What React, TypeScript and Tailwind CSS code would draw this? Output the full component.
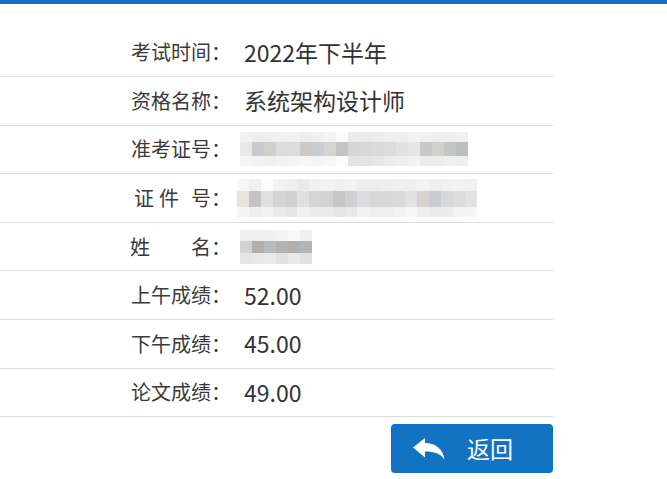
type MosaicRow = { h: string; cells: string[] };

const idMosaic: MosaicRow[] = [
  {
    h: 'h-[10px]',
    cells: [
      'bg-[#f0f0f0]', 'bg-[#eeeeee]', 'bg-[#efefef]', 'bg-[#f0f0f0]', 'bg-[#f1f1f1]', 'bg-[#eeeeee]', 'bg-[#f0f0f0]',
      'bg-[#f4f4f4]', 'bg-[#fbfbfb]', 'bg-[#ececec]', 'bg-[#eaeaea]', 'bg-[#ececec]', 'bg-[#eeeeee]', 'bg-[#efefef]',
      'bg-[#f3f3f3]', 'bg-[#f0f0f0]', 'bg-[#eeeeee]', 'bg-[#eeeeee]', 'bg-[#f0f0f0]',
    ],
  },
  {
    h: 'h-[14px]',
    cells: [
      'bg-[#e8e8e8]', 'bg-[#c8c9cc]', 'bg-[#cfcfcc]', 'bg-[#dcdcdc]', 'bg-[#dcdcdc]', 'bg-[#cdc8c4]', 'bg-[#c9ccd3]',
      'bg-[#d4d4d4]', 'bg-[#c6c4c2]', 'bg-[#d6d6d6]', 'bg-[#d8d8d8]', 'bg-[#dadada]', 'bg-[#dcdcdc]', 'bg-[#e2e2e2]',
      'bg-[#e6e6e6]', 'bg-[#c8c8cb]', 'bg-[#d2d0cb]', 'bg-[#c4c5c5]', 'bg-[#bcbdc1]',
    ],
  },
  {
    h: 'h-[10px]',
    cells: [
      'bg-[#f4f4f4]', 'bg-[#f2f2f2]', 'bg-[#f0f0f0]', 'bg-[#f2f2f2]', 'bg-[#f4f4f4]', 'bg-[#f6f6f6]', 'bg-[#f4f4f4]',
      'bg-[#f6f6f6]', 'bg-[#fdfdfd]', 'bg-[#e2e2e2]', 'bg-[#e4e4e4]', 'bg-[#e6e6e6]', 'bg-[#ebebeb]', 'bg-[#eeeeee]',
      'bg-[#f2f2f2]', 'bg-[#ebebeb]', 'bg-[#ececec]', 'bg-[#eef0f0]', 'bg-[#eeeeee]',
    ],
  },
];

const certMosaic: MosaicRow[] = [
  {
    h: 'h-[12px]',
    cells: [
      'bg-[#f6f6f6]', 'bg-[#f0f0f0]', 'bg-[#fbfbfb]', 'bg-[#f2f2f2]', 'bg-[#f0f0f0]', 'bg-[#e8eaea]', 'bg-[#f0f0f0]',
      'bg-[#f2f2f2]', 'bg-[#f0f0f0]', 'bg-[#f2f2f2]', 'bg-[#eeeeee]', 'bg-[#ececec]', 'bg-[#eeeeee]', 'bg-[#f0f0f0]',
      'bg-[#eeeeee]', 'bg-[#f2f2f2]', 'bg-[#eeeeee]', 'bg-[#f0f0f0]', 'bg-[#f2f2f2]', 'bg-[#f0f0f0]',
    ],
  },
  {
    h: 'h-[16px]',
    cells: [
      'bg-[#e6e3e0]', 'bg-[#c4c4c6]', 'bg-[#e0e0e0]', 'bg-[#d4d4d4]', 'bg-[#d0d0d0]', 'bg-[#e0e0e0]', 'bg-[#d4d4d4]',
      'bg-[#d2d2d2]', 'bg-[#c8c6c4]', 'bg-[#d0d0d0]', 'bg-[#dcdce0]', 'bg-[#d8d8d8]', 'bg-[#d8d8d8]', 'bg-[#dadada]',
      'bg-[#e2e2e2]', 'bg-[#d6d2ce]', 'bg-[#c8ccd0]', 'bg-[#d8d8da]', 'bg-[#dcdcdc]', 'bg-[#e2e2e2]',
    ],
  },
  {
    h: 'h-[10px]',
    cells: [
      'bg-[#f4f4f4]', 'bg-[#eeeeee]', 'bg-[#f2f2f2]', 'bg-[#eaeaea]', 'bg-[#e6e6e6]', 'bg-[#f2f2f2]', 'bg-[#ececec]',
      'bg-[#eaeaea]', 'bg-[#e4e4e4]', 'bg-[#e8e8e8]', 'bg-[#f2f2f2]', 'bg-[#eeeeee]', 'bg-[#eeeeee]', 'bg-[#f2f2f2]',
      'bg-[#f6f6f6]', 'bg-[#eeeeee]', 'bg-[#eaeaea]', 'bg-[#ececec]', 'bg-[#f4f4f4]', 'bg-[#f6f6f6]',
    ],
  },
];

const nameMosaic: MosaicRow[] = [
  {
    h: 'h-[11px]',
    cells: ['bg-[#eeeeee]', 'bg-[#eeeeee]', 'bg-[#f0f0f0]', 'bg-[#f3f3f3]', 'bg-[#f8f8f8]', 'bg-[#f0f0f0]'],
  },
  {
    h: 'h-[12px]',
    cells: ['bg-[#d2d2d2]', 'bg-[#b2aeab]', 'bg-[#b9babf]', 'bg-[#b1b3b3]', 'bg-[#b3afac]', 'bg-[#b2b5b8]'],
  },
  {
    h: 'h-[11px]',
    cells: ['bg-[#e4e4e4]', 'bg-[#e8e8e8]', 'bg-[#eaeaea]', 'bg-[#e2e2e2]', 'bg-[#e8e8e8]', 'bg-[#e0e0e0]'],
  },
];

const Mosaic = ({ rows, className }: { rows: MosaicRow[]; className: string }) => (
  <div className={`flex flex-col blur-[0.6px] ${className}`}>
    {rows.map((r, i) => (
      <div key={i} className={`flex ${r.h}`}>
        {r.cells.map((c, j) => (
          <div key={j} className={`w-[12px] h-full ${c}`}></div>
        ))}
      </div>
    ))}
  </div>
);

// reply arrow, head left, tail curling down
const ReplyIcon = () => (
  <svg viewBox="0 0 32 22" className="w-[32px] h-[22px]" fill="currentColor">
    <path d="M0 9.5 L12 0 L12 5 C22 5 30 10.5 31.5 21.5 C27.5 15.5 21 13.5 12 13.5 L12 19.5 Z" />
  </svg>
);

const rows = [
  { label: <span>考试时间：</span>, value: <span>2022年下半年</span> },
  { label: <span>资格名称：</span>, value: <span>系统架构设计师</span> },
  { label: <span>准考证号：</span>, value: <Mosaic rows={idMosaic} className="-ml-[4px]" /> },
  {
    label: (
      <span>
        证<span className="ml-[5px]">件</span>
        <span className="ml-[12px]">号：</span>
      </span>
    ),
    value: <Mosaic rows={certMosaic} className="-ml-[7px]" />,
  },
  {
    label: (
      <span>
        姓<span className="ml-[41px]">名：</span>
      </span>
    ),
    value: <Mosaic rows={nameMosaic} className="-ml-[4px]" />,
  },
  { label: <span>上午成绩：</span>, value: <span>52.00</span> },
  { label: <span>下午成绩：</span>, value: <span>45.00</span> },
  { label: <span>论文成绩：</span>, value: <span>49.00</span> },
];

const App = () => {
  return (
    <div className="min-h-screen bg-white font-['Microsoft_YaHei','Noto_Sans_CJK_SC','Noto_Sans',sans-serif] text-[#333333]">
      <div className="h-[4px] w-full bg-[#1373c3]"></div>
      <div className="w-[553px] pt-[24.4px]">
        {rows.map((row, i) => (
          <div key={i} className="flex items-center h-[48.6px] border-b border-[#dddddd]">
            <div className="w-[231px] flex-none text-right text-[20px] leading-none text-[#3a3a3a]">
              {row.label}
            </div>
            <div className="pl-[13px] text-[23px] leading-none">{row.value}</div>
          </div>
        ))}
        <div className="flex justify-end pt-[7px]">
          <button className="flex items-center w-[162px] h-[49px] rounded-[4px] bg-[#1373c3] pl-[22px] text-white">
            <ReplyIcon />
            <span className="ml-[22px] text-[23px] leading-none">返回</span>
          </button>
        </div>
      </div>
    </div>
  );
};

export default App;
